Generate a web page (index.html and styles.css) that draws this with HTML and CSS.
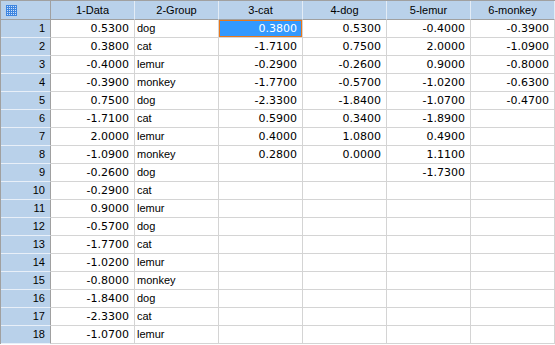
FILE: index.html
```html
<!DOCTYPE html>
<html>
<head>
<meta charset="utf-8">
<link rel="stylesheet" href="styles.css">
</head>
<body>
<table class="grid">
<colgroup><col class="c-rh"><col class="c-d"><col class="c-d"><col class="c-d"><col class="c-d"><col class="c-d"><col class="c-d"></colgroup>
<thead>
<tr>
<th class="corner"><svg width="11" height="11" viewBox="0 0 11 11"><rect width="11" height="11" fill="#3f86e0"/><g fill="#cfe2fb"><rect x="1" y="1" width="1" height="1"/><rect x="3" y="1" width="1" height="1"/><rect x="5" y="1" width="1" height="1"/><rect x="7" y="1" width="1" height="1"/><rect x="9" y="1" width="1" height="1"/><rect x="1" y="3" width="1" height="1"/><rect x="3" y="3" width="1" height="1"/><rect x="5" y="3" width="1" height="1"/><rect x="7" y="3" width="1" height="1"/><rect x="9" y="3" width="1" height="1"/><rect x="1" y="5" width="1" height="1"/><rect x="3" y="5" width="1" height="1"/><rect x="5" y="5" width="1" height="1"/><rect x="7" y="5" width="1" height="1"/><rect x="9" y="5" width="1" height="1"/><rect x="1" y="7" width="1" height="1"/><rect x="3" y="7" width="1" height="1"/><rect x="5" y="7" width="1" height="1"/><rect x="7" y="7" width="1" height="1"/><rect x="9" y="7" width="1" height="1"/><rect x="1" y="9" width="1" height="1"/><rect x="3" y="9" width="1" height="1"/><rect x="5" y="9" width="1" height="1"/><rect x="7" y="9" width="1" height="1"/><rect x="9" y="9" width="1" height="1"/></g></svg></th>
<th class="ch">1-Data</th><th class="ch">2-Group</th><th class="ch">3-cat</th><th class="ch">4-dog</th><th class="ch">5-lemur</th><th class="ch">6-monkey</th>
</tr>
</thead>
<tbody>
<tr><th class="rh">1</th><td class="n">0.5300</td><td class="t">dog</td><td class="n sel"><div class="sel-box">0.3800</div></td><td class="n">0.5300</td><td class="n">-0.4000</td><td class="n">-0.3900</td></tr>
<tr><th class="rh">2</th><td class="n">0.3800</td><td class="t">cat</td><td class="n">-1.7100</td><td class="n">0.7500</td><td class="n">2.0000</td><td class="n">-1.0900</td></tr>
<tr><th class="rh">3</th><td class="n">-0.4000</td><td class="t">lemur</td><td class="n">-0.2900</td><td class="n">-0.2600</td><td class="n">0.9000</td><td class="n">-0.8000</td></tr>
<tr><th class="rh">4</th><td class="n">-0.3900</td><td class="t">monkey</td><td class="n">-1.7700</td><td class="n">-0.5700</td><td class="n">-1.0200</td><td class="n">-0.6300</td></tr>
<tr><th class="rh">5</th><td class="n">0.7500</td><td class="t">dog</td><td class="n">-2.3300</td><td class="n">-1.8400</td><td class="n">-1.0700</td><td class="n">-0.4700</td></tr>
<tr><th class="rh">6</th><td class="n">-1.7100</td><td class="t">cat</td><td class="n">0.5900</td><td class="n">0.3400</td><td class="n">-1.8900</td><td class="n"></td></tr>
<tr><th class="rh">7</th><td class="n">2.0000</td><td class="t">lemur</td><td class="n">0.4000</td><td class="n">1.0800</td><td class="n">0.4900</td><td class="n"></td></tr>
<tr><th class="rh">8</th><td class="n">-1.0900</td><td class="t">monkey</td><td class="n">0.2800</td><td class="n">0.0000</td><td class="n">1.1100</td><td class="n"></td></tr>
<tr><th class="rh">9</th><td class="n">-0.2600</td><td class="t">dog</td><td class="n"></td><td class="n"></td><td class="n">-1.7300</td><td class="n"></td></tr>
<tr><th class="rh">10</th><td class="n">-0.2900</td><td class="t">cat</td><td class="n"></td><td class="n"></td><td class="n"></td><td class="n"></td></tr>
<tr><th class="rh">11</th><td class="n">0.9000</td><td class="t">lemur</td><td class="n"></td><td class="n"></td><td class="n"></td><td class="n"></td></tr>
<tr><th class="rh">12</th><td class="n">-0.5700</td><td class="t">dog</td><td class="n"></td><td class="n"></td><td class="n"></td><td class="n"></td></tr>
<tr><th class="rh">13</th><td class="n">-1.7700</td><td class="t">cat</td><td class="n"></td><td class="n"></td><td class="n"></td><td class="n"></td></tr>
<tr><th class="rh">14</th><td class="n">-1.0200</td><td class="t">lemur</td><td class="n"></td><td class="n"></td><td class="n"></td><td class="n"></td></tr>
<tr><th class="rh">15</th><td class="n">-0.8000</td><td class="t">monkey</td><td class="n"></td><td class="n"></td><td class="n"></td><td class="n"></td></tr>
<tr><th class="rh">16</th><td class="n">-1.8400</td><td class="t">dog</td><td class="n"></td><td class="n"></td><td class="n"></td><td class="n"></td></tr>
<tr><th class="rh">17</th><td class="n">-2.3300</td><td class="t">cat</td><td class="n"></td><td class="n"></td><td class="n"></td><td class="n"></td></tr>
<tr><th class="rh">18</th><td class="n">-1.0700</td><td class="t">lemur</td><td class="n"></td><td class="n"></td><td class="n"></td><td class="n"></td></tr>
</tbody>
</table>
</body>
</html>
```
FILE: styles.css
```css
html, body {
  margin: 0;
  padding: 0;
  background: #ffffff;
}
.grid {
  border-collapse: separate;
  border-spacing: 0;
  table-layout: fixed;
  width: 555px;
  border-top: 1px solid #a0a0a0;
  border-left: 1px solid #a0a0a0;
  font-family: "Liberation Sans", Arial, sans-serif;
  font-size: 11px;
  color: #000;
}
.c-rh { width: 50px; }
.c-d { width: 84px; }
.grid th, .grid td {
  height: 17px;
  padding: 0;
  line-height: 17px;
  white-space: nowrap;
  overflow: hidden;
  box-sizing: border-box;
}
.corner {
  height: 18px !important;
  background: #b9d1ea;
  border-right: 1px solid #a0a0a0;
  border-bottom: 1px solid #a0a0a0;
  text-align: left;
  vertical-align: top;
  padding: 4px 0 0 5px !important;
  line-height: 0 !important;
}
.ch {
  height: 18px !important;
  background: #b9d1ea;
  font-weight: normal;
  text-align: center;
  border-right: 1px solid #e3ecf6;
  border-bottom: 1px solid #a0a0a0;
  line-height: 18px !important;
}
.rh {
  height: 18px !important;
  background: #b9d1ea;
  font-weight: normal;
  text-align: right;
  padding-right: 5px !important;
  border-right: 1px solid #a0a0a0;
  border-bottom: 1px solid #e8eff8;
}
.grid td {
  height: 18px;
  border-right: 1px solid #d4d4d4;
  border-bottom: 1px solid #d4d4d4;
}
.n {
  text-align: right;
  padding-right: 5px !important;
  font-family: "DejaVu Sans", sans-serif;
  font-size: 11px;
}
.t {
  text-align: left;
  padding-left: 2px !important;
}
.grid td.sel {
  padding: 0 !important;
  background: #3399ff;
  color: #ffffff;
  border-right-color: #d4d4d4;
}
.sel-box {
  box-sizing: border-box;
  height: 17px;
  line-height: 15px;
  padding-right: 4px;
  border: 1px solid #e8781c;
  background: #3399ff;
}
```
